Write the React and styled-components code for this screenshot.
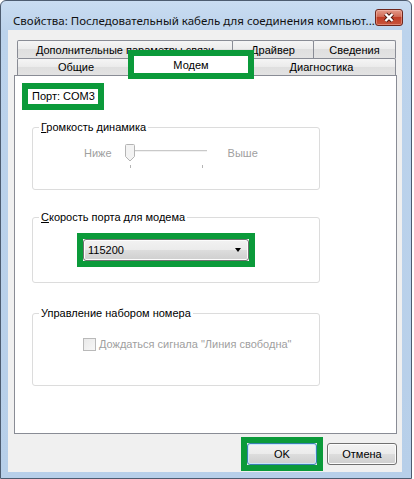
import React from 'react';
import styled, { createGlobalStyle, css } from 'styled-components';

const GREEN = '#0b9a3a';

const GlobalStyle = createGlobalStyle`
  html, body {
    margin: 0;
    padding: 0;
    background: #fff;
  }
  body {
    font-family: "Liberation Sans", Arial, sans-serif;
    font-size: 11px;
    color: #000;
  }
`;

const marked = css`
  outline: 6px solid ${GREEN};
  outline-offset: 0;
`;

// green annotation frame, square, drawn around whatever it wraps
const Mark = styled.div`
  display: flex;
  ${marked}
`;

const Window = styled.div`
  width: 412px;
  height: 479px;
  box-sizing: border-box;
  border: 1px solid #4d5c70;
  border-radius: 6px 6px 0 0;
  background: linear-gradient(#c9dcf1, #bcd3ec 30px, #b7cfe9);
  padding: 0 9px 6px 7px;
  display: flex;
  flex-direction: column;
`;

const TitleBar = styled.div`
  height: 29px;
  display: flex;
  align-items: flex-start;
  justify-content: space-between;
`;

const Title = styled.div`
  margin: 12px 0 0 5px;
  font-family: "Noto Sans", "Open Sans", sans-serif;
  font-size: 11.5px;
  line-height: 16px;
  color: #111;
  white-space: nowrap;
`;

const CloseButton = styled.div`
  margin: 8px -1px 0 0;
  width: 29px;
  height: 17px;
  box-sizing: border-box;
  border: 1px solid #6e261c;
  border-radius: 3px;
  background: linear-gradient(#e49a89, #d06a55 45%, #c03d26 50%, #c8553c);
  box-shadow: inset 0 0 0 1px rgba(255, 210, 200, 0.4);
  display: flex;
  align-items: center;
  justify-content: center;
`;

const Client = styled.div`
  flex: 1;
  background: #f0f0f0;
  padding: 10px 5px 0 6px;
  display: flex;
  flex-direction: column;
`;

const TabStrip = styled.div`
  display: flex;
  flex-direction: column;
  padding-left: 3px;
`;

const TabRow = styled.div`
  display: flex;
  height: ${(p) => p.$h}px;
`;

const Tab = styled.div`
  width: ${(p) => p.$w}px;
  box-sizing: border-box;
  border: 1px solid #898c95;
  border-bottom: none;
  border-radius: 2px 2px 0 0;
  background: linear-gradient(#f5f5f5, #ebebeb 50%, #dfdfdf 50%, #e3e3e3);
  display: flex;
  align-items: center;
  justify-content: center;
  white-space: nowrap;
  & + & {
    margin-left: -1px;
  }
  ${(p) =>
    p.$active &&
    css`
      position: relative;
      z-index: 2;
      margin-top: -2px;
      height: 17px;
      background: #fff;
      border-color: #fff;
      border-radius: 0;
      ${marked}
    `}
`;

const Panel = styled.div`
  height: 359px;
  box-sizing: border-box;
  border: 1px solid #898c95;
  background: #fff;
  padding: 13px 0 0 17px;
  display: flex;
  flex-direction: column;
  align-items: flex-start;
`;

const PortLabel = styled.div`
  margin-left: -4px;
  padding: 0 3px 0 4px;
  height: 15px;
  line-height: 15px;
  background: #fff;
  ${marked}
`;

const Group = styled.fieldset`
  margin: ${(p) => p.$gap}px 0 0 0;
  padding: 0;
  width: 288px;
  height: ${(p) => p.$h}px;
  box-sizing: border-box;
  border: 1px solid #dcdcdc;
  border-radius: 3px;
  min-inline-size: 0;
`;

const Legend = styled.legend`
  margin-left: 6px;
  padding: 0 2px;
  line-height: 14px;
`;

const GroupBody = styled.div`
  display: flex;
  padding: ${(p) => p.$top}px 0 0 ${(p) => p.$left}px;
`;

const SliderRow = styled.div`
  display: flex;
  align-items: flex-start;
  color: #a0a0a0;
  line-height: 18px;
`;

const Slider = styled.svg`
  display: block;
  margin: 0 16px 0 10px;
`;

const Combo = styled.div`
  width: 166px;
  height: 22px;
  box-sizing: border-box;
  border: 1px solid #707070;
  border-radius: 3px;
  background: linear-gradient(#f2f2f2, #ebebeb 50%, #dddddd 50%, #cfcfcf);
  box-shadow: inset 0 0 0 1px #fcfcfc;
  padding: 0 4px;
  display: flex;
  align-items: center;
  justify-content: space-between;
`;

const Arrow = styled.span`
  width: 0;
  height: 0;
  border-left: 3.5px solid transparent;
  border-right: 3.5px solid transparent;
  border-top: 4px solid #000;
  margin-right: 3px;
`;

const CheckRow = styled.label`
  display: flex;
  align-items: center;
  gap: 3px;
  color: #a0a0a0;
  line-height: 16px;
`;

const Box = styled.span`
  width: 13px;
  height: 13px;
  box-sizing: border-box;
  border: 1px solid #b9b9b9;
  background: linear-gradient(135deg, #e9e9e9, #f7f7f7);
`;

const Footer = styled.div`
  display: flex;
  justify-content: flex-end;
  gap: 10px;
  margin-top: 9px;
`;

const Button = styled.div`
  width: 70px;
  height: 22px;
  box-sizing: border-box;
  border: 1px solid ${(p) => (p.$default ? '#3c7fb1' : '#707070')};
  border-radius: 3px;
  background: linear-gradient(#f2f2f2, #ebebeb 50%, #dddddd 50%, #cfcfcf);
  box-shadow: inset 0 0 0 1px ${(p) => (p.$default ? '#c8e6f8' : '#fcfcfc')};
  display: flex;
  align-items: center;
  justify-content: center;
`;

const CloseGlyph = () => (
  <svg width="14" height="11" viewBox="0 0 14 11">
    <path d="M3.5 2 L10.5 9 M10.5 2 L3.5 9" stroke="#4f1a12" strokeWidth="4.2" />
    <path d="M3.5 2 L10.5 9 M10.5 2 L3.5 9" stroke="#fff" strokeWidth="2.4" />
  </svg>
);

const VolumeSlider = () => (
  <Slider width="90" height="24" viewBox="0 0 90 24">
    <line x1="8" y1="6.5" x2="85" y2="6.5" stroke="#c9c9c9" />
    <line x1="8" y1="7.5" x2="85" y2="7.5" stroke="#f1f1f1" />
    <path
      d="M4.5 0.5 h7 a1 1 0 0 1 1 1 v11 l-4.5 4.5 l-4.5 -4.5 v-11 a1 1 0 0 1 1 -1 z"
      fill="#f3f3f3"
      stroke="#b4b4b4"
    />
    <line x1="8.5" y1="21" x2="8.5" y2="24" stroke="#b4b4b4" />
    <line x1="80.5" y1="21" x2="80.5" y2="24" stroke="#b4b4b4" />
  </Slider>
);

export default function App() {
  return (
    <>
      <GlobalStyle />
      <Window>
        <TitleBar>
          <Title>Свойства: Последовательный кабель для соединения компьют...</Title>
          <CloseButton>
            <CloseGlyph />
          </CloseButton>
        </TitleBar>
        <Client>
          <TabStrip>
            <TabRow $h={18}>
              <Tab $w={216}>Дополнительные параметры связи</Tab>
              <Tab $w={82}>Драйвер</Tab>
              <Tab $w={83}>Сведения</Tab>
            </TabRow>
            <TabRow $h={17}>
              <Tab $w={118}>Общие</Tab>
              <Tab $w={114} $active>
                Модем
              </Tab>
              <Tab $w={149}>Диагностика</Tab>
            </TabRow>
          </TabStrip>
          <Panel>
            <PortLabel>Порт: COM3</PortLabel>
            <Group $gap={16} $h={70}>
              <Legend>
                <u>Г</u>ромкость динамика
              </Legend>
              <GroupBody $top={10} $left={51}>
                <SliderRow>
                  <span>Ниже</span>
                  <VolumeSlider />
                  <span>Выше</span>
                </SliderRow>
              </GroupBody>
            </Group>
            <Group $gap={20} $h={73}>
              <Legend>
                <u>С</u>корость порта для модема
              </Legend>
              <GroupBody $top={15} $left={50}>
                <Mark>
                  <Combo>
                    <span>115200</span>
                    <Arrow />
                  </Combo>
                </Mark>
              </GroupBody>
            </Group>
            <Group $gap={23} $h={80}>
              <Legend>Управление набором номера</Legend>
              <GroupBody $top={16} $left={50}>
                <CheckRow>
                  <Box />
                  <span>
                    <u>Д</u>ождаться сигнала "Линия свободна"
                  </span>
                </CheckRow>
              </GroupBody>
            </Group>
          </Panel>
          <Footer>
            <Mark>
              <Button $default>OK</Button>
            </Mark>
            <Button>Отмена</Button>
          </Footer>
        </Client>
      </Window>
    </>
  );
}
